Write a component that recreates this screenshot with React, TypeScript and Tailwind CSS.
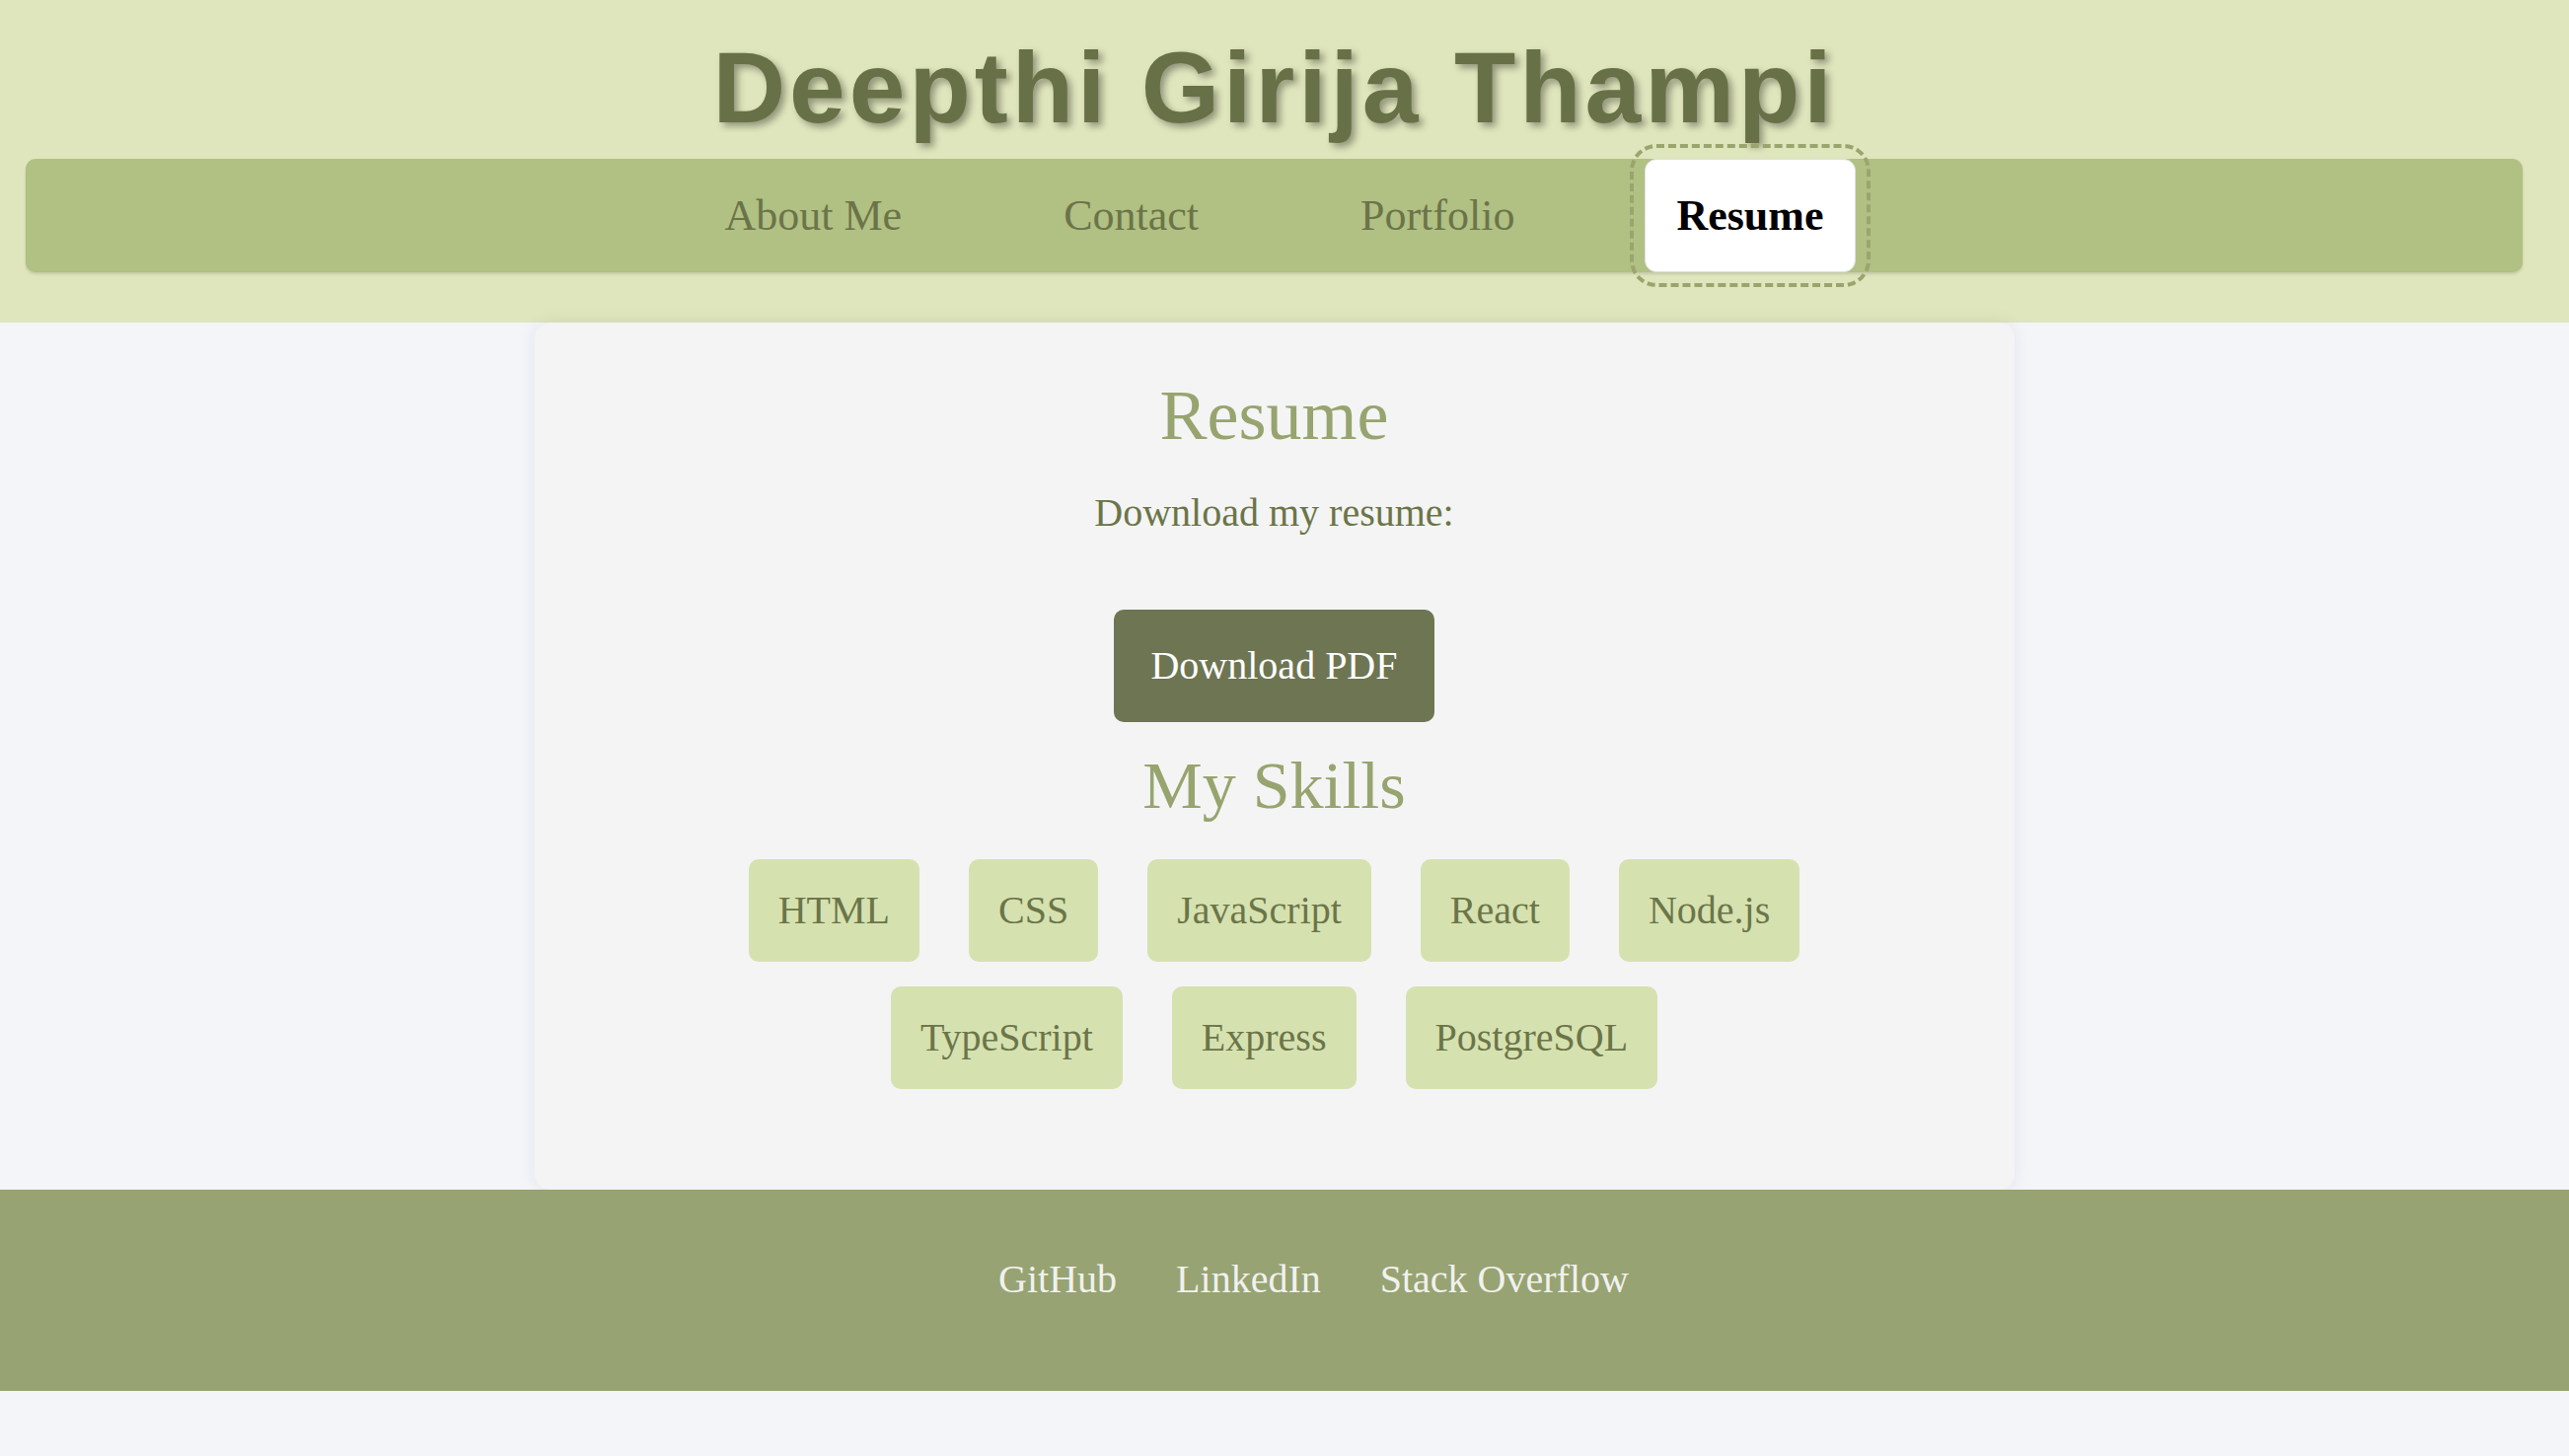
const navItems = ["About Me", "Contact", "Portfolio", "Resume"];
const skills = ["HTML", "CSS", "JavaScript", "React", "Node.js", "TypeScript", "Express", "PostgreSQL"];
const socials = ["GitHub", "LinkedIn", "Stack Overflow"];

const Header = () => {
  return (
    <header className="bg-[#dfe5bc] pt-[31px] pb-[51px]">
      <div className="pr-[21px]">
        <h1 className="text-center font-['Liberation_Sans',Arial,sans-serif] text-[102px] leading-[117px] font-bold tracking-[4px] text-[#687048] [text-shadow:4px_4px_7px_rgba(0,0,0,0.35)]">
          Deepthi Girija Thampi
        </h1>
        <nav className="mt-[13px] ml-[26px] mr-[26px] h-[115px] rounded-[10px] bg-[#b1c083] shadow-[0_2px_3px_rgba(0,0,0,0.12)]">
          <ul className="flex h-full items-center justify-center gap-[100px]">
            {navItems.map((item) => {
              const active = item === "Resume";
              return (
                <li key={item}>
                  <a
                    href="#"
                    className={
                      active
                        ? "flex h-[115px] items-center rounded-[12px] border border-[#dde0e6] bg-white px-[31px] text-[44px] leading-[51px] font-bold text-black outline-[4px] outline-offset-[11px] outline-dashed outline-[#9aa56e]"
                        : "flex h-[115px] items-center px-[32px] text-[44px] leading-[51px] text-[#6b7449]"
                    }
                  >
                    {item}
                  </a>
                </li>
              );
            })}
          </ul>
        </nav>
      </div>
    </header>
  );
};

const ResumeCard = () => {
  return (
    <section className="mx-auto w-[1500px] rounded-[16px] bg-[#f4f4f4] pt-[54px] pb-[102px] text-center shadow-[0_0_18px_rgba(30,40,80,0.08)]">
      <h2 className="text-[72px] leading-[80px] text-[#97a46f]">Resume</h2>
      <p className="mt-[36px] text-[40px] leading-[46px] text-[#6b7548]">Download my resume:</p>
      <a
        href="#"
        className="mt-[75px] inline-block rounded-[10px] bg-[#6e7552] px-[37px] py-[34px] text-[40px] leading-[46px] text-white"
      >
        Download PDF
      </a>
      <h2 className="mt-[26px] text-[68px] leading-[76px] text-[#97a46f]">My Skills</h2>
      <ul className="mx-auto mt-[37px] flex w-[1200px] flex-wrap justify-center gap-x-[50px] gap-y-[25px]">
        {skills.map((skill) => (
          <li
            key={skill}
            className="rounded-[10px] bg-[#d6e1b0] px-[30px] py-[29px] text-[40px] leading-[46px] text-[#6b7548]"
          >
            {skill}
          </li>
        ))}
      </ul>
    </section>
  );
};

const Footer = () => {
  return (
    <footer className="bg-[#97a372] pt-[68px] pb-[90px]">
      <ul className="flex justify-center gap-[60px] pl-[80px] pr-[21px]">
        {socials.map((s) => (
          <li key={s}>
            <a href="#" className="text-[40px] leading-[46px] text-[#f1f1ee]">
              {s}
            </a>
          </li>
        ))}
      </ul>
    </footer>
  );
};

export default function App() {
  return (
    <div className="min-h-screen bg-[#f4f5f9] font-['Liberation_Serif','Times_New_Roman',serif]">
      <Header />
      <main className="pr-[21px]">
        <ResumeCard />
      </main>
      <Footer />
    </div>
  );
}
